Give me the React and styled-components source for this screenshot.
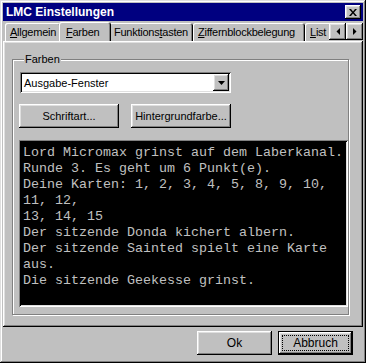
import React from 'react'
import styled, { createGlobalStyle, css } from 'styled-components'

const GlobalStyle = createGlobalStyle`
  html, body { margin: 0; padding: 0; background: #c0c0c0; }
  * { box-sizing: border-box; }
`

const raised = css`
  box-shadow: inset -1px -1px #000, inset 1px 1px #fff,
    inset -2px -2px #808080, inset 2px 2px #dfdfdf;
`

const sunken = css`
  box-shadow: inset 1px 1px #808080, inset -1px -1px #fff,
    inset 2px 2px #000, inset -2px -2px #dfdfdf;
`

const Window = styled.div`
  width: 366px;
  height: 363px;
  padding: 3px;
  background: #c0c0c0;
  display: flex;
  flex-direction: column;
  font-family: "Liberation Sans", Arial, sans-serif;
  font-size: 11px;
  color: #000;
  box-shadow: inset -1px -1px #000, inset 1px 1px #dfdfdf,
    inset -2px -2px #808080, inset 2px 2px #fff;
`

const TitleBar = styled.div`
  height: 18px;
  background: #000080;
  display: flex;
  align-items: center;
  padding: 0 2px 0 3px;
`

const Title = styled.div`
  flex: 1;
  color: #fff;
  font-weight: bold;
  font-size: 12px;
`

const SmallButton = styled.button`
  width: ${p => p.$w || 16}px;
  height: ${p => p.$h || 14}px;
  padding: 0;
  border: none;
  background: #c0c0c0;
  display: flex;
  align-items: center;
  justify-content: center;
  flex-shrink: 0;
  ${raised}
`

const TabStrip = styled.div`
  display: flex;
  align-items: flex-end;
  height: 19px;
  margin-top: 1px;
  position: relative;
  z-index: 1;
`

const TabList = styled.div`
  flex: 1;
  display: flex;
  align-items: flex-end;
  overflow: hidden;
  padding-left: 2px;
  height: 20px;
`

const Tab = styled.div`
  flex-shrink: 0;
  width: ${p => p.$w}px;
  height: 18px;
  padding-left: 5px;
  display: flex;
  align-items: center;
  white-space: nowrap;
  letter-spacing: -0.25px;
  background: #c0c0c0;
  border-radius: 2px 3px 0 0;
  box-shadow: inset 1px 1px #fff, inset -1px 0 #000, inset -2px 0 #808080;
  ${p => p.$active && css`
    width: ${p.$w + 4}px;
    height: 20px;
    margin: 0 -2px -1px -2px;
    padding: 0 0 1px 7px;
    position: relative;
    z-index: 2;
  `}
`

const ScrollButtons = styled.div`
  display: flex;
  align-self: flex-start;
  margin-top: 1px;
`

const Panel = styled.div`
  flex: 1;
  background: #c0c0c0;
  padding: 12px 14px 12px 9px;
  display: flex;
  flex-direction: column;
  ${raised}
`

const Group = styled.fieldset`
  flex: 1;
  margin: 0;
  padding: 7px 0 7px 6px;
  border: 1px solid #808080;
  box-shadow: 1px 1px 0 #fff, inset 1px 1px 0 #fff;
  display: flex;
  flex-direction: column;
  min-width: 0;
`

const Legend = styled.legend`
  padding: 0 1px;
  margin-left: 5px;
  line-height: 12px;
  background: #c0c0c0;
`

const SelectBox = styled.div`
  width: 211px;
  height: 21px;
  margin-left: 1px;
  background: #fff;
  display: flex;
  align-items: center;
  padding: 2px;
  ${sunken}
`

const SelectText = styled.div`
  flex: 1;
  padding-left: 2px;
`

const ButtonRow = styled.div`
  display: flex;
  gap: 12px;
  margin-top: 11px;
`

const PushButton = styled.button`
  width: ${p => p.$w || 100}px;
  height: 24px;
  border: none;
  padding: 0;
  background: #c0c0c0;
  font-family: "Liberation Sans", Arial, sans-serif;
  font-size: ${p => p.$size || 11}px;
  color: #000;
  display: flex;
  align-items: center;
  justify-content: center;
  ${raised}
  ${p => p.$default && css`
    box-shadow: inset 0 0 0 1px #000, inset -2px -2px #000, inset 2px 2px #fff,
      inset -3px -3px #808080, inset 3px 3px #dfdfdf;
  `}
`

const Focus = styled.span`
  width: calc(100% - 8px);
  height: 16px;
  display: flex;
  align-items: center;
  justify-content: center;
  border: 1px dotted #000;
`

const Output = styled.div`
  flex: 1;
  margin-top: 12px;
  background: #000;
  color: #c0c0c0;
  font-family: "Liberation Mono", "Courier New", monospace;
  font-size: 13.33px;
  line-height: 16px;
  white-space: pre;
  padding: 5px 2px 0 4px;
  overflow: hidden;
  ${sunken}
`

const Footer = styled.div`
  height: 33px;
  display: flex;
  justify-content: flex-end;
  align-items: flex-start;
  gap: 6px;
  padding: 4px 10px 0 0;
`

const Arrow = ({ dir }) => (
  <svg width="4" height="7" viewBox="0 0 4 7">
    {dir === 'left'
      ? <polygon points="4,0 4,7 0.5,3.5" fill="#000" />
      : <polygon points="0,0 0,7 3.5,3.5" fill="#000" />}
  </svg>
)

const lines = [
  'Lord Micromax grinst auf dem Laberkanal.',
  'Runde 3. Es geht um 6 Punkt(e).',
  'Deine Karten: 1, 2, 3, 4, 5, 8, 9, 10,',
  '11, 12,',
  '13, 14, 15',
  'Der sitzende Donda kichert albern.',
  'Der sitzende Sainted spielt eine Karte',
  'aus.',
  'Die sitzende Geekesse grinst.',
]

export default function App() {
  return (
    <>
      <GlobalStyle />
      <Window>
        <TitleBar>
          <Title>LMC Einstellungen</Title>
          <SmallButton>
            <svg width="8" height="7" viewBox="0 0 8 7">
              <path d="M0 0h2l2 2.5L6 0h2L5 3.5 8 7H6L4 4.5 2 7H0l3-3.5z" fill="#000" />
            </svg>
          </SmallButton>
        </TitleBar>
        <TabStrip>
          <TabList>
            <Tab $w={56}><u>A</u>llgemein</Tab>
            <Tab $w={48} $active><u>F</u>arben</Tab>
            <Tab $w={84}>Funktions<u>t</u>asten</Tab>
            <Tab $w={112}><u>Z</u>iffernblockbelegung</Tab>
            <Tab $w={34}><u>L</u>ist</Tab>
          </TabList>
          <ScrollButtons>
            <SmallButton $w={17} $h={17}><Arrow dir="left" /></SmallButton>
            <SmallButton $w={17} $h={17}><Arrow dir="right" /></SmallButton>
          </ScrollButtons>
        </TabStrip>
        <Panel>
          <Group>
            <Legend>Farben</Legend>
            <SelectBox>
              <SelectText>Ausgabe-Fenster</SelectText>
              <SmallButton $w={16} $h={17}>
                <svg width="7" height="4" viewBox="0 0 7 4">
                  <polygon points="0,0 7,0 3.5,4" fill="#000" />
                </svg>
              </SmallButton>
            </SelectBox>
            <ButtonRow>
              <PushButton>Schriftart...</PushButton>
              <PushButton>Hintergrundfarbe...</PushButton>
            </ButtonRow>
            <Output>{lines.join('\n')}</Output>
          </Group>
        </Panel>
        <Footer>
          <PushButton $w={75} $size={12}>Ok</PushButton>
          <PushButton $w={75} $size={12} $default><Focus>Abbruch</Focus></PushButton>
        </Footer>
      </Window>
    </>
  )
}
